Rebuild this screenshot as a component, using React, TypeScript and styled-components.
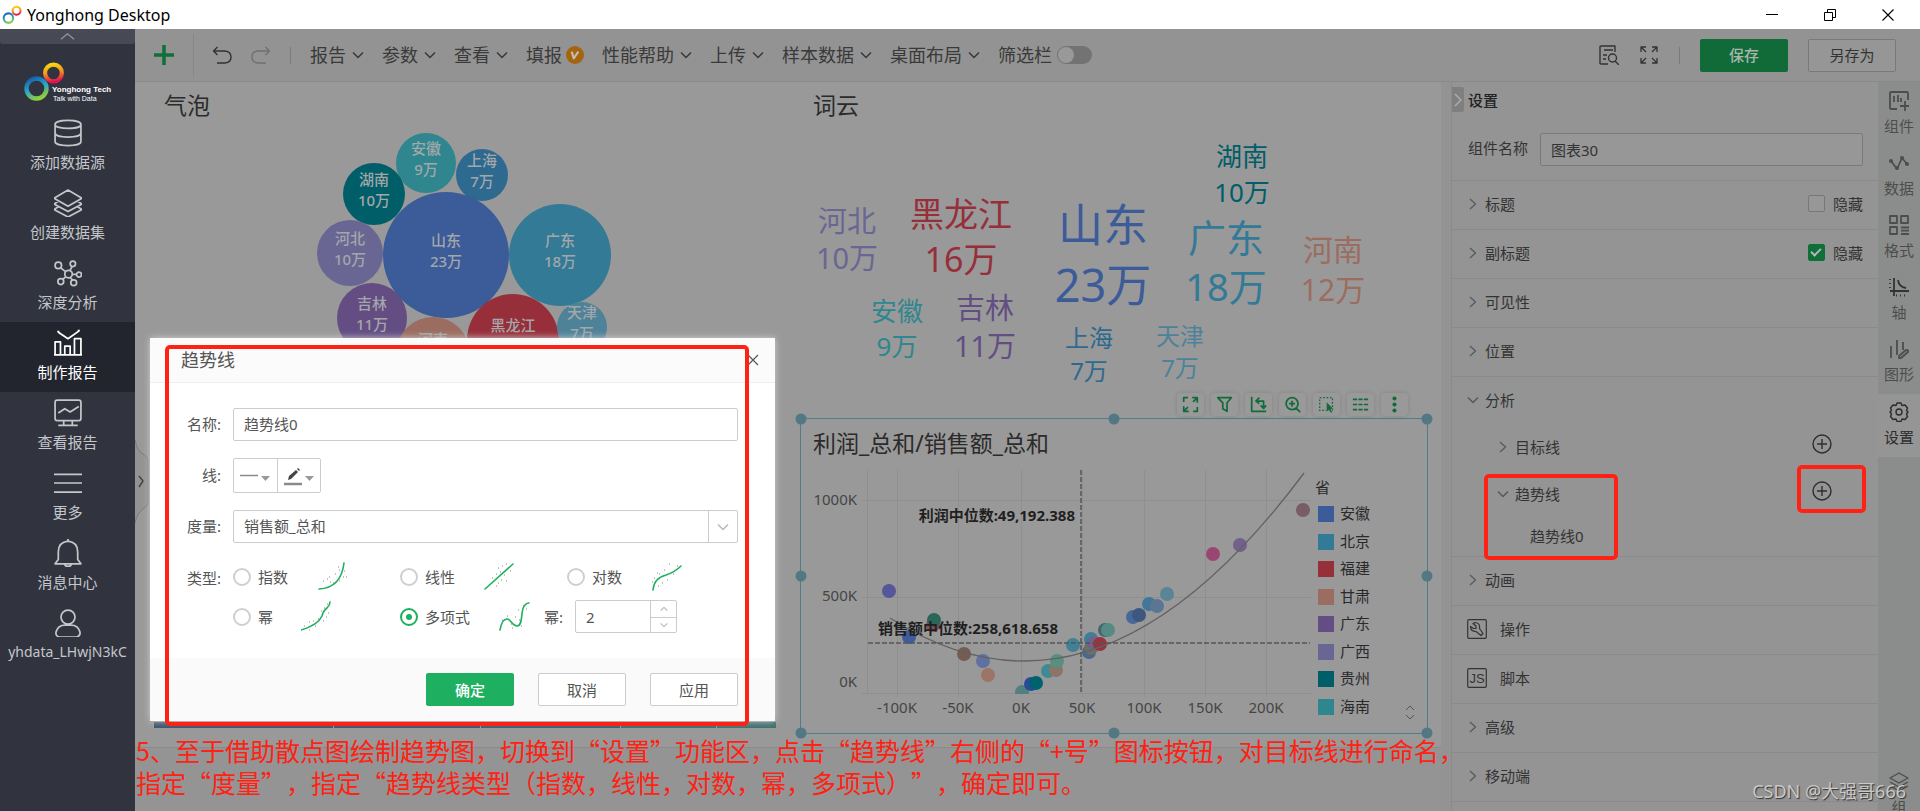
import React from 'react';
import styled, { createGlobalStyle, css } from 'styled-components';

const GlobalStyle = createGlobalStyle`
  *, *::before, *::after { box-sizing: border-box; }
  body {
    margin: 0;
    background: #939393;
    color: #333333;
    font-family: 'Noto Sans', 'Noto Sans CJK SC', sans-serif;
    font-size: 15px;
    line-height: 20px;
  }
  button, input, select { font: inherit; color: inherit; margin: 0; }
  button { padding: 0; border: 0; background: none; cursor: pointer; }
  svg { display: block; flex: none; }
  ul, nav { list-style: none; margin: 0; padding: 0; }
  h1, h2, p { margin: 0; font-weight: 400; }
`;

/* ---------- Window frame ---------- */

const Window = styled.div`
  position: relative;
  display: flex;
  flex-direction: column;
  height: 100vh;
  overflow: hidden;
`;

const TitleBar = styled.header`
  display: flex;
  align-items: center;
  flex: none;
  height: 29px;
  padding: 0 26px 0 2px;
  gap: 5px;
  background: #ffffff;
  color: #000000;
  font-size: 16px;
`;

const AppName = styled.h1`
  flex: 1;
  font-size: 16px;
  line-height: 24px;
`;

const WindowButtons = styled.div`
  display: flex;
  gap: 46px;
`;

const WindowButton = styled.button`
  width: 12px;
  height: 12px;
`;

const Body = styled.div`
  display: flex;
  flex: 1;
  min-height: 0;
`;

/* ---------- Left navigation ---------- */

const Sidebar = styled.aside`
  flex: none;
  width: 135px;
  background: #31343f;
  color: #c4c6ca;
`;

const SidebarFold = styled.button`
  display: flex;
  justify-content: center;
  align-items: center;
  width: 100%;
  height: 15px;
  border-radius: 0 0 3px 3px;
  background: #474a55;
`;

const Brand = styled.div`
  display: flex;
  height: 68px;
  padding: 17px 0 0 23px;
`;

const SideItem = styled.a<{ $active?: boolean; $latin?: boolean }>`
  display: flex;
  flex-direction: column;
  align-items: center;
  gap: 5px;
  height: 70px;
  padding-top: 7px;
  color: ${(p) => (p.$active ? '#ffffff' : 'inherit')};
  background: ${(p) => (p.$active ? '#22252e' : 'transparent')};
  font-size: ${(p) => (p.$latin ? 14 : 15)}px;
  text-decoration: none;
`;

/* ---------- Top toolbar ---------- */

const Main = styled.div`
  display: flex;
  flex-direction: column;
  flex: 1;
  min-width: 0;
`;

const Toolbar = styled.div`
  display: flex;
  align-items: center;
  flex: none;
  height: 53px;
  padding-right: 24px;
  border-bottom: 1px solid #8a8a8a;
  background: #939393;
  color: #3a3a3a;
`;

const AddButton = styled.button`
  display: flex;
  align-items: center;
  justify-content: center;
  width: 59px;
  height: 43px;
  border-right: 1px solid #878787;
`;

const History = styled.div`
  display: flex;
  align-items: center;
  gap: 19px;
  padding: 0 19px 0 18px;
`;

const Divider = styled.span`
  width: 1px;
  height: 17px;
  background: #7b7b7b;
`;

const Menu = styled.nav`
  display: flex;
  align-items: center;
  flex: 1;
  gap: 18px;
  font-size: 18px;
  line-height: 26px;
  white-space: nowrap;
`;

const MenuButton = styled.button`
  display: flex;
  align-items: center;
  gap: 6px;
`;

const VipBadge = styled.span`
  display: flex;
  align-items: center;
  justify-content: center;
  width: 18px;
  height: 18px;
  margin-left: -2px;
  border-radius: 50%;
  background: #a4650f;
`;

const SwitchLabel = styled.label`
  display: flex;
  align-items: center;
  gap: 5px;
`;

const Switch = styled.input`
  appearance: none;
  width: 35px;
  height: 18px;
  border-radius: 9px;
  background: #737373;
  &::before {
    content: '';
    display: block;
    width: 16px;
    height: 16px;
    margin: 1px;
    border-radius: 50%;
    background: #999999;
  }
`;

const ToolActions = styled.div`
  display: flex;
  align-items: center;
  gap: 20px;
`;

const ToolButton = styled.button<{ $primary?: boolean }>`
  width: 88px;
  height: 33px;
  border-radius: 2px;
  ${(p) =>
    p.$primary
      ? css`
          background: #116b39;
          color: #a8b5ad;
          font-weight: 500;
        `
      : css`
          border: 1px solid #797979;
          background: #969696;
          color: #333333;
        `}
`;

/* ---------- Report canvas ---------- */

const Workspace = styled.div`
  display: flex;
  flex: 1;
  min-height: 0;
`;

const Canvas = styled.div`
  position: relative;
  flex: 1;
  min-width: 0;
  margin-right: 10px;
  padding-bottom: 63px;
  background: #949494;
`;

const Board = styled.div`
  display: grid;
  grid-template-columns: 1fr 1fr;
  align-items: start;
  height: 100%;
  border-bottom: 1px solid #8b8b8b;
  background: #999999;
`;

const Widget = styled.section`
  min-width: 0;
`;

const WidgetTitle = styled.h2<{ $inset: number; $height: number }>`
  height: ${(p) => p.$height}px;
  padding-left: ${(p) => p.$inset}px;
  color: #2b2b2b;
  font-size: 23px;
  line-height: ${(p) => p.$height - 2}px;
`;

const Drawing = styled.svg`
  width: 100%;
  height: auto;
`;

const SelectedWidget = styled.section`
  position: relative;
  margin: 0 13px 14px 12px;
  border: 1px solid #527c88;
`;

const Handle = styled.span<{ $x: string; $y: string }>`
  position: absolute;
  left: ${(p) => p.$x};
  top: ${(p) => p.$y};
  width: 11px;
  height: 11px;
  border-radius: 50%;
  background: #527884;
  transform: translate(-50%, -50%);
`;

const WidgetTools = styled.div`
  position: absolute;
  right: 19px;
  bottom: 100%;
  display: flex;
  gap: 7px;
  margin-bottom: 3px;
`;

const WidgetTool = styled.button`
  display: flex;
  align-items: center;
  justify-content: center;
  width: 27px;
  height: 23px;
  border-radius: 4px;
  background: #999999;
  box-shadow: 0 0 4px rgba(0, 0, 0, 0.14);
`;

const TableSlice = styled.div`
  display: grid;
  grid-template-columns: 179px 146px 139px 95px 59px;
  gap: 1px;
  align-self: end;
  height: 6px;
  margin: 0 0 20px 19px;
`;

const TableCell = styled.span<{ $color: string }>`
  background: ${(p) => p.$color};
`;

const SideHandle = styled.button`
  position: absolute;
  left: 0;
  top: 358px;
  width: 14px;
  height: 83px;
`;

/* ---------- Settings panel ---------- */

const Panel = styled.aside`
  flex: none;
  width: 427px;
  border-left: 1px solid #8a8a8a;
  background: #949494;
`;

const PanelHead = styled.div`
  display: flex;
  gap: 4px;
  height: 49px;
  padding-top: 5px;
`;

const PanelTitle = styled.h2`
  padding-top: 3px;
  color: #222222;
  font-size: 15px;
  font-weight: 500;
`;

const FoldButton = styled.button`
  display: flex;
  align-items: center;
  justify-content: center;
  width: 12px;
  height: 25px;
  border-radius: 0 2px 2px 0;
  background: #7f7f7f;
`;

const NameRow = styled.label`
  display: flex;
  align-items: flex-start;
  gap: 12px;
  height: 49px;
  padding: 2px 15px 14px 16px;
  line-height: 30px;
`;

const NameInput = styled.input`
  flex: 1;
  min-width: 0;
  height: 33px;
  padding: 0 10px;
  border: 1px solid #7a7a7a;
  border-radius: 2px;
  background: #979797;
`;

const Section = styled.div`
  border-top: 1px solid #8a8a8a;
`;

const SectionRow = styled.div<{ $indent?: number; $height?: number }>`
  position: relative;
  display: flex;
  align-items: center;
  height: ${(p) => p.$height ?? 48}px;
  padding: 0 15px 3px ${(p) => 15 + (p.$indent ?? 0)}px;
`;

const SectionButton = styled.button<{ $wide?: boolean }>`
  display: flex;
  align-items: center;
  flex: 1;
  gap: ${(p) => (p.$wide ? 13 : 6)}px;
  text-align: left;
`;

const HideLabel = styled.label`
  display: flex;
  align-items: center;
  gap: 8px;
`;

const CheckBox = styled.input`
  appearance: none;
  display: grid;
  place-items: center;
  width: 17px;
  height: 17px;
  border: 1px solid #777777;
  border-radius: 2px;
  background: #979797;
  &:checked {
    border-color: #0f6f38;
    background: #0f6f38;
  }
  &:checked::before {
    content: '';
    width: 10px;
    height: 6px;
    margin-top: -3px;
    border: solid #b5b5b5;
    border-width: 0 0 2px 2px;
    transform: rotate(-45deg);
  }
`;

const RoundAdd = styled.button`
  width: 20px;
  height: 20px;
  margin: 0 31px 6px 0;
`;

const MarkedGroup = styled.div`
  position: relative;
`;

const RedFrame = styled.span<{ $left: number; $top: number; $width: number; $height: number }>`
  position: absolute;
  left: ${(p) => p.$left}px;
  top: ${(p) => p.$top}px;
  width: ${(p) => p.$width}px;
  height: ${(p) => p.$height}px;
  border: 4px solid #ff2113;
  border-radius: 5px;
  pointer-events: none;
`;

/* ---------- Tab rail ---------- */

const Rail = styled.nav`
  display: flex;
  flex-direction: column;
  flex: none;
  width: 42px;
  padding-top: 2px;
  background: #8a8d8b;
  color: #4d4d4d;
`;

const RailTab = styled.button<{ $active?: boolean; $last?: boolean }>`
  display: flex;
  flex-direction: column;
  align-items: center;
  flex: none;
  gap: 5px;
  height: ${(p) => (p.$active ? 63 : 62)}px;
  padding-top: ${(p) => (p.$active ? 8 : 7)}px;
  background: ${(p) => (p.$active ? '#959595' : 'transparent')};
  color: ${(p) => (p.$active ? '#2c2c2c' : 'inherit')};
  margin-top: ${(p) => (p.$last ? '308px' : '0')};
`;

/* ---------- Trend line dialog ---------- */

const Dialog = styled.form`
  position: absolute;
  left: 150px;
  top: 338px;
  width: 625px;
  border-radius: 2px;
  background: #ffffff;
  color: #555555;
  box-shadow: 0 0 7px #d0d0d0;
`;

const DialogHead = styled.div`
  display: flex;
  align-items: center;
  justify-content: space-between;
  height: 45px;
  padding: 0 16px 0 31px;
  border-bottom: 1px solid #eceef3;
  background: #fbfbfb;
`;

const DialogTitle = styled.h2`
  font-size: 18px;
  line-height: 26px;
`;

const DialogBody = styled.div`
  display: grid;
  grid-template-columns: 34px 1fr;
  gap: 17px 12px;
  padding: 25px 37px;
`;

const FieldLabel = styled.label`
  align-self: center;
  justify-self: end;
  padding-bottom: 2px;
  white-space: nowrap;
`;

const TypeLabel = styled(FieldLabel)`
  align-self: start;
  line-height: 36px;
`;

const TextBox = styled.input`
  width: 100%;
  height: 33px;
  padding: 0 10px 2px;
  border: 1px solid #cccccc;
  border-radius: 2px;
  background: #ffffff;
`;

const StyleButtons = styled.div`
  display: flex;
  width: 88px;
  height: 35px;
  border: 1px solid #cccccc;
  border-radius: 2px;
`;

const StyleButton = styled.button`
  display: flex;
  align-items: center;
  justify-content: center;
  flex: 1;
  & + & {
    border-left: 1px solid #cccccc;
  }
`;

const SelectWrap = styled.div`
  display: flex;
  height: 33px;
  border: 1px solid #cccccc;
  border-radius: 2px;
`;

const MeasureSelect = styled.select`
  appearance: none;
  flex: 1;
  padding: 0 10px 1px;
  border: 0;
  background: transparent;
`;

const SelectArrow = styled.span`
  display: flex;
  align-items: center;
  justify-content: center;
  width: 29px;
  border-left: 1px solid #cccccc;
`;

const TypeGrid = styled.div`
  display: grid;
  grid-template-columns: repeat(3, 167px);
  gap: 7px 0;
`;

const TypeOption = styled.div`
  display: flex;
  align-items: center;
  height: 33px;
  white-space: nowrap;
`;

const RadioLabel = styled.label<{ $gap: number }>`
  display: flex;
  align-items: center;
  gap: 7px;
  margin-right: ${(p) => p.$gap}px;
`;

const Radio = styled.input`
  appearance: none;
  display: grid;
  place-items: center;
  width: 18px;
  height: 18px;
  border: 2px solid #cfcfcf;
  border-radius: 50%;
  &:checked {
    border-color: #1eb060;
  }
  &:checked::before {
    content: '';
    width: 6px;
    height: 6px;
    border-radius: 50%;
    background: #1eb060;
  }
`;

const PowerField = styled.div`
  display: flex;
  align-items: center;
  gap: 12px;
  height: 33px;
  margin-left: -23px;
`;

const Stepper = styled.div`
  display: flex;
  width: 102px;
  height: 33px;
  border: 1px solid #cccccc;
  border-radius: 2px;
`;

const StepperInput = styled.input`
  flex: 1;
  min-width: 0;
  padding: 0 10px;
  border: 0;
  background: transparent;
`;

const StepperButtons = styled.div`
  display: grid;
  grid-template-rows: 1fr 1fr;
  width: 26px;
  border-left: 1px solid #cccccc;
`;

const StepButton = styled.button`
  display: grid;
  place-items: center;
  & + & {
    border-top: 1px solid #cccccc;
  }
`;

const DialogFoot = styled.div`
  display: flex;
  justify-content: flex-end;
  gap: 24px;
  height: 63px;
  padding: 15px 37px;
  background: #fafafa;
`;

const DialogButton = styled.button<{ $primary?: boolean }>`
  width: 88px;
  height: 33px;
  border: 1px solid ${(p) => (p.$primary ? '#1eb060' : '#cccccc')};
  border-radius: 2px;
  background: ${(p) => (p.$primary ? '#1eb060' : '#ffffff')};
  color: ${(p) => (p.$primary ? '#ffffff' : '#555555')};
  font-weight: ${(p) => (p.$primary ? 500 : 400)};
`;

const Note = styled.p`
  position: absolute;
  left: 136px;
  bottom: 13px;
  color: #ff2113;
  font-family: 'Noto Sans CJK SC', sans-serif;
  font-size: 25px;
  line-height: 32px;
  text-spacing-trim: space-all;
  white-space: nowrap;
`;

const Watermark = styled.span`
  position: absolute;
  right: 14px;
  bottom: 7px;
  color: #c9c9c9;
  font-size: 18px;
  line-height: 26px;
  text-shadow: 1px 1px 1px #333333;
`;

/* ---------- Icons ---------- */

type IconProps = { d: string; size?: number; box?: number; color?: string; w?: number; children?: React.ReactNode };

const Icon = ({ d, size = 20, box = 20, color = 'currentColor', w = 1.5, children }: IconProps) => (
  <svg width={size} height={size} viewBox={`0 0 ${box} ${box}`} fill="none" stroke={color} strokeWidth={w} strokeLinejoin="round" aria-hidden="true">
    <path d={d} />
    {children}
  </svg>
);

const Down = ({ color = '#3a3a3a', size = 12 }: { color?: string; size?: number }) => (
  <Icon d="M1 3.5L6 8.5L11 3.5" box={12} size={size} color={color} w={1.6} />
);
const Right = () => <Icon d="M3 1L8.500 6L3 11" box={12} size={12} color="#5a5a5a" w={1.3} />;

const Rings = ({ size, id }: { size: number; id: string }) => (
  <svg width={size} height={size} viewBox="0 0 42 42" fill="none" aria-hidden="true">
    <defs>
      <linearGradient id={`${id}a`} x1="0.2" y1="0" x2="0.6" y2="1">
        <stop offset="0" stopColor="#1463b0" />
        <stop offset="0.5" stopColor="#2aa5c9" />
        <stop offset="1" stopColor="#8fce3c" />
      </linearGradient>
      <linearGradient id={`${id}b`} x1="0.3" y1="0" x2="0.5" y2="1">
        <stop offset="0" stopColor="#fbd40d" />
        <stop offset="0.5" stopColor="#f39121" />
        <stop offset="1" stopColor="#e8114b" />
      </linearGradient>
    </defs>
    <circle cx="13.500" cy="27.500" r="10" stroke={`url(#${id}a)`} strokeWidth="4.400" />
    <circle cx="30.500" cy="12" r="8.400" stroke={`url(#${id}b)`} strokeWidth="4.200" />
  </svg>
);

const sideItems: { label: string; d: string }[] = [
  { label: '添加数据源', d: 'M1 5c0-5 24-5 24 0s-24 5-24 0v16c0 5 24 5 24 0V5M1 13c0 5 24 5 24 0' },
  { label: '创建数据集', d: 'M13 1L26 8.500L13 16L0 8.500zM4 11.500L0 14L13 21L26 14L22 11.500M4 16.500L0 19L13 26L26 19L22 16.500' },
  {
    label: '深度分析',
    d: 'M17 14a3.500 3.500 0 1 1-7 0a3.500 3.500 0 1 1 7 0M7 6a3 3 0 1 1-6 0a3 3 0 1 1 6 0M20 4.500a2.500 2.500 0 1 1-5 0a2.500 2.500 0 1 1 5 0M25.500 14.500a2.300 2.300 0 1 1-4.600 0a2.300 2.300 0 1 1 4.600 0M9 21a2.700 2.700 0 1 1-5.400 0a2.700 2.700 0 1 1 5.400 0M21 22a2.700 2.700 0 1 1-5.400 0a2.700 2.700 0 1 1 5.400 0M6 8l5 4M16.700 7l-2 4M17 14.300h4M11 16.500l-3 2.500M15 17l2.500 3',
  },
  { label: '制作报告', d: 'M1 24V12h5v12M10 24V16h5v8M19 24V9h6v15M0 24h26M4 3l9 6L23 2M3 2.500h2M22 1.500h2' },
  { label: '查看报告', d: 'M3 1h20q2 0 2 2v15q0 2-2 2H3q-2 0-2-2V3q0-2 2-2zM9 20v4M17 20v4M4 24.500h18M4 13l6-4l5 3l8-5' },
  { label: '更多', d: 'M0 5h26M0 13h26M0 21.500h26' },
  { label: '消息中心', d: 'M1 23h24L22 19V12q0-9-9-10q-9 1-9 10v7zM10 23q0 2.500 3 2.500t3-2.500M13 2V0' },
  { label: 'yhdata_LHwjN3kC', d: 'M19.500 7.500a6.500 6.500 0 1 1-13 0a6.500 6.500 0 1 1 13 0M5 26q-4-1-3-5q2-6 8-6h6q6 0 8 6q1 4-3 5z' },
];

const menuItems = ['报告', '参数', '查看', '填报', '性能帮助', '上传', '样本数据', '桌面布局'];

/* ---------- Chart data ---------- */

const bubbles: [string, string, number, number, number, string][] = [
  ['安徽', '9万', 426, 163, 30, '#30868f'],
  ['上海', '7万', 482, 175, 26, '#2e6990'],
  ['湖南', '10万', 374, 194, 31, '#005e69'],
  ['山东', '23万', 446, 255, 63, '#3b5b99'],
  ['广东', '18万', 560, 255, 51, '#337a96'],
  ['河北', '10万', 350, 253, 33, '#6a6694'],
  ['吉林', '11万', 372, 318, 35, '#634d83'],
  ['河南', '12万', 433, 354, 37, '#9b6d60'],
  ['黑龙江', '16万', 513, 340, 46, '#972f3a'],
  ['天津', '7万', 582, 327, 25, '#4e8299'],
];

const words: [string, string, number, number, number, number, string][] = [
  ['河北', '10万', 847, 221, 258, 29, '#6a6694'],
  ['黑龙江', '16万', 961, 214, 259, 34, '#972f3a'],
  ['山东', '23万', 1103, 225, 285, 45, '#3b5b99'],
  ['湖南', '10万', 1242, 156, 192, 26, '#005e69'],
  ['广东', '18万', 1226, 238, 287, 38, '#337a96'],
  ['河南', '12万', 1333, 250, 290, 30, '#9b6d60'],
  ['安徽', '9万', 897, 311, 346, 26, '#30868f'],
  ['吉林', '11万', 985, 308, 346, 29, '#634d83'],
  ['上海', '7万', 1089, 338, 371, 24, '#2e6990'],
  ['天津', '7万', 1180, 336, 368, 24, '#4e8299'],
];

const dots: [number, number, string][] = [
  [1303, 510, '#7a5c66'], [1240, 545, '#72618c'], [1213, 554, '#9a4672'], [1167, 594, '#5a8596'],
  [1149, 604, '#437799'], [1157, 606, '#5b7692'], [1133, 617, '#4a6799'], [1139, 615, '#3c587f'],
  [1105, 630, '#40686a'], [1108, 630, '#568a84'], [1091, 639, '#3c7f96'], [1073, 645, '#418096'],
  [1089, 652, '#49678f'], [1091, 648, '#6b6f66'], [1094, 643, '#72618c'], [1100, 644, '#97343f'],
  [1048, 671, '#3f8a94'], [1056, 670, '#8d7468'], [1057, 661, '#588f80'], [1022, 692, '#51807f'],
  [1031, 684, '#2c4a9a'], [1036, 683, '#00626e'], [889, 591, '#56569a'], [933, 625, '#8f4a55'],
  [934, 620, '#2a665a'], [909, 637, '#3f5c9b'], [964, 654, '#755c50'], [983, 661, '#6070a0'], [988, 675, '#9c7566'],
];

const xTicks: [number, string][] = [
  [897, '-100K'], [958, '-50K'], [1021, '0K'], [1082, '50K'], [1144, '100K'], [1205, '150K'], [1266, '200K'],
];
const yTicks: [number, number, string][] = [[500, 500, '1000K'], [597, 596, '500K'], [693, 682, '0K']];

const legend: [string, string][] = [
  ['安徽', '#3b5b99'], ['北京', '#337a96'], ['福建', '#972f3a'], ['甘肃', '#9b6d60'],
  ['广东', '#634d83'], ['广西', '#6a6694'], ['贵州', '#005e69'], ['海南', '#30868f'],
];

const widgetTools: { label: string; d: string }[] = [
  { label: '放大', d: 'M2 7V2h5M12 2h6v6M18 13v5h-5M8 18H2v-6M13 7l4-4M7 13l-4 4' },
  { label: '筛选', d: 'M2 2h16l-5 6v10l-5-3V8z' },
  { label: '行列互换', d: 'M2 1v17h17M8 6h8v8M11 2L7 6l4 3M12.500 11l3.500 3.500l3-3.500' },
  { label: '缩放', d: 'M16.500 9a7 7 0 1 1-14 0a7 7 0 1 1 14 0M14 14l5 5M6 9h7M9.500 5.500v7' },
  { label: '选择', d: '' },
  { label: '明细', d: 'M1 4h5M7.500 4h5M14 4h5M1 10h5M7.500 10h5M14 10h5M1 16h5M7.500 16h5M14 16h5' },
  { label: '更多操作', d: '' },
];

const BubbleChart = () => (
  <Drawing viewBox="135 130 653 288" fontSize="15" fontWeight="500" textAnchor="middle" role="img" aria-label="气泡">
    {bubbles.map(([name, value, x, y, r, color]) => (
      <g key={name}>
        <circle cx={x} cy={y} r={r} fill={color} />
        <text x={x} y={y - 9} fill="#a3a7aa">{name}</text>
        <text x={x} y={y + 12} fill="#a3a7aa">{value}</text>
      </g>
    ))}
  </Drawing>
);

const WordCloud = () => (
  <Drawing viewBox="788 130 653 288" textAnchor="middle" role="img" aria-label="词云">
    {words.map(([name, value, x, y1, y2, size, color]) => (
      <g key={name} fill={color} fontSize={size}>
        <text x={x} y={y1} dy="0.38em">{name}</text>
        <text x={x} y={y2} dy="0.38em">{value}</text>
      </g>
    ))}
  </Drawing>
);

const ScatterChart = () => (
  <Drawing viewBox="801 470 626 263" fontSize="15" role="img" aria-label="利润_总和/销售额_总和">
    <defs>
      <clipPath id="plot"><rect x="867" y="470" width="450" height="224" /></clipPath>
    </defs>
    <g stroke="#8f8f8f">
      <path d="M867.500 470V694" />
      {xTicks.map(([x]) => <path key={x} d={`M${x}.500 470V697`} />)}
      {yTicks.map(([y]) => <path key={y} d={`M862 ${y}.500H1311`} />)}
    </g>
    <g fill="#454545">
      {xTicks.map(([x, t]) => <text key={t} x={x} y="713" textAnchor="middle">{t}</text>)}
      {yTicks.map(([, y, t]) => <text key={t} x="857" y={y + 5} textAnchor="end">{t}</text>)}
    </g>
    <g clipPath="url(#plot)">
      {dots.map(([x, y, c], i) => <circle key={i} cx={x} cy={y} r="7" fill={c} />)}
    </g>
    <path d="M890 618Q1097 751 1304 473" fill="none" stroke="#626262" strokeWidth="1.300" />
    <path d="M1081 470V693M868 643H1310" stroke="#555555" strokeWidth="1.500" strokeDasharray="5 2" />
    <g fill="#1f1f1f" fontWeight="700">
      <text x="1075" y="521" textAnchor="end">利润中位数:49,192.388</text>
      <text x="1058" y="634" textAnchor="end">销售额中位数:258,618.658</text>
    </g>
    <g fill="#2a2a2a">
      <text x="1315" y="493">省</text>
      {legend.map(([name, color], i) => {
        const y = Math.round(514 + i * 27.5);
        return (
          <g key={name}>
            <rect x="1318" y={y - 8} width="16" height="16" fill={color} />
            <text x="1340" y={y + 5}>{name}</text>
          </g>
        );
      })}
    </g>
    <path d="M1406 710l4-4l4 4M1406 715l4 4l4-4" fill="none" stroke="#555555" />
  </Drawing>
);

const fits: Record<string, { line: string; dots: string }> = {
  指数: { line: 'M2 28Q24 27 27 2', dots: 'M6 20h1M10 18h1M13 21h1M18 13h1M21 6h1M22 9h1M16 22h1M22 20h1M26 16h1M29 16h1M12 16h1M27 10h1' },
  线性: { line: 'M1 28L29 3', dots: 'M8 17h1M12 13h1M14 7h1M18 5h1M22 3h1M20 14h1M22 20h1M14 22h1M17 19h1M26 10h1M12 25h1M16 11h1' },
  对数: { line: 'M3 29Q4 17 16 14Q25 11 31 5', dots: 'M2 21h1M4 17h1M9 13h1M14 9h1M19 3h1M12 22h1M17 19h1M23 13h1M27 5h1M8 25h1M7 12h1' },
  幂: { line: 'M0 29Q17 24 21 15Q22 10 26 7Q29 4 29 1', dots: 'M3 25h1M8 21h1M12 20h1M8 29h1M14 25h1M17 18h1M23 7h1M26 3h1M22 20h1M25 16h1M27 12h1M20 10h1' },
  多项式: { line: 'M1 29Q3 18 8 18C12 18 13 25 18 25C26 25 19 3 30 2', dots: 'M3 19h1M8 15h1M12 23h1M16 16h1M20 19h1M19 9h1M24 5h1M27 8h1M13 27h1M22 25h1' },
};

const FitIcon = ({ name }: { name: string }) => (
  <svg width="32" height="32" viewBox="0 0 32 32" fill="none" aria-hidden="true">
    <path d={fits[name].dots} stroke="#8a8a8a" strokeWidth="1.200" />
    <path d={fits[name].line} stroke="#1eb060" strokeWidth="1.600" strokeLinecap="round" />
  </svg>
);

const FitOption = ({ name, gap, checked }: { name: string; gap: number; checked?: boolean }) => (
  <TypeOption>
    <RadioLabel $gap={gap}>
      <Radio type="radio" name="fit" defaultChecked={checked} />
      {name}
    </RadioLabel>
    <FitIcon name={name} />
  </TypeOption>
);

const TrendDialog = () => (
  <Dialog onSubmit={(e) => e.preventDefault()}>
    <DialogHead>
      <DialogTitle>趋势线</DialogTitle>
      <button type="button" aria-label="关闭">
        <Icon d="M1 1L11 11M11 1L1 11" box={12} size={12} color="#555555" w={1.2} />
      </button>
    </DialogHead>
    <DialogBody>
      <FieldLabel htmlFor="trend-name">名称:</FieldLabel>
      <TextBox id="trend-name" defaultValue="趋势线0" />
      <FieldLabel as="span">线:</FieldLabel>
      <StyleButtons>
        <StyleButton type="button" aria-label="线型">
          <svg width="32" height="20" viewBox="0 0 32 20" aria-hidden="true">
            <path d="M1 9.500H19" stroke="#8a8a8a" strokeWidth="1.500" />
            <path d="M22 10h9l-4.500 5z" fill="#999999" />
          </svg>
        </StyleButton>
        <StyleButton type="button" aria-label="颜色">
          <svg width="32" height="20" viewBox="0 0 32 20" aria-hidden="true">
            <path d="M5 14l1-4l7-6l2 2l-7 7zM14 3l1-1l2 2l-1 1z" fill="#444444" />
            <path d="M1 18H19" stroke="#8a8a8a" strokeWidth="2.500" />
            <path d="M22 10h9l-4.500 5z" fill="#999999" />
          </svg>
        </StyleButton>
      </StyleButtons>
      <FieldLabel htmlFor="trend-measure">度量:</FieldLabel>
      <SelectWrap>
        <MeasureSelect id="trend-measure"><option>销售额_总和</option></MeasureSelect>
        <SelectArrow><Down color="#bbbbbb" /></SelectArrow>
      </SelectWrap>
      <TypeLabel as="span">类型:</TypeLabel>
      <TypeGrid>
        <FitOption name="指数" gap={29} />
        <FitOption name="线性" gap={29} />
        <FitOption name="对数" gap={28} />
        <FitOption name="幂" gap={28} />
        <FitOption name="多项式" gap={29} checked />
        <PowerField>
          <label htmlFor="trend-power">幂:</label>
          <Stepper>
            <StepperInput id="trend-power" defaultValue="2" />
            <StepperButtons>
              <StepButton type="button" aria-label="增加"><Icon d="M2 8L6 4L10 8" box={12} size={10} color="#bbbbbb" /></StepButton>
              <StepButton type="button" aria-label="减少"><Icon d="M2 4L6 8L10 4" box={12} size={10} color="#bbbbbb" /></StepButton>
            </StepperButtons>
          </Stepper>
        </PowerField>
      </TypeGrid>
    </DialogBody>
    <DialogFoot>
      <DialogButton $primary>确定</DialogButton>
      <DialogButton type="button">取消</DialogButton>
      <DialogButton type="button">应用</DialogButton>
    </DialogFoot>
    <RedFrame $left={15} $top={7} $width={584} $height={381} />
  </Dialog>
);

const PlainSection = ({ label, hide }: { label: string; hide?: boolean }) => (
  <Section>
    <SectionRow>
      <SectionButton><Right />{label}</SectionButton>
      {hide !== undefined && (
        <HideLabel><CheckBox type="checkbox" defaultChecked={hide} />隐藏</HideLabel>
      )}
    </SectionRow>
  </Section>
);

const AddCircle = ({ label }: { label: string }) => (
  <RoundAdd aria-label={label}>
    <Icon d="M19 10a9 9 0 1 1-18 0a9 9 0 1 1 18 0M5 10h10M10 5v10" color="#2e2e2e" w={1.4} />
  </RoundAdd>
);

const SettingsPanel = () => (
  <Panel>
    <PanelHead>
      <FoldButton aria-label="收起"><Icon d="M5 2L11 8L5 14" box={16} size={16} color="#aaaaaa" w={1.6} /></FoldButton>
      <PanelTitle>设置</PanelTitle>
    </PanelHead>
    <NameRow>
      组件名称
      <NameInput defaultValue="图表30" />
    </NameRow>
    <PlainSection label="标题" hide={false} />
    <PlainSection label="副标题" hide />
    <PlainSection label="可见性" />
    <PlainSection label="位置" />
    <Section>
      <SectionRow><SectionButton><Down color="#5a5a5a" />分析</SectionButton></SectionRow>
      <SectionRow $indent={30} $height={47}>
        <SectionButton><Right />目标线</SectionButton>
        <AddCircle label="添加目标线" />
      </SectionRow>
      <MarkedGroup>
        <SectionRow $indent={30} $height={47}>
          <SectionButton><Down color="#5a5a5a" />趋势线</SectionButton>
          <AddCircle label="添加趋势线" />
          <RedFrame $left={345} $top={-7} $width={69} $height={48} />
        </SectionRow>
        <SectionRow $indent={63} $height={37}>
          <SectionButton>趋势线0</SectionButton>
        </SectionRow>
        <RedFrame $left={32} $top={2} $width={134} $height={86} />
      </MarkedGroup>
    </Section>
    <PlainSection label="动画" />
    <Section>
      <SectionRow>
        <SectionButton $wide>
          <Icon d="M2 .7h16q1.300 0 1.300 1.300v16q0 1.300-1.300 1.300H2q-1.300 0-1.300-1.300V2q0-1.300 1.300-1.300zM6 4.500l3 2.500v2.500H6.500L3.500 7.500q0 5 5.500 5l5 4l2-2l-3.500-5q1-5.500-4.500-6z" color="#333333" w={1.200} />
          操作
        </SectionButton>
      </SectionRow>
    </Section>
    <Section>
      <SectionRow>
        <SectionButton $wide>
          <Icon d="M2 .7h16q1.300 0 1.300 1.300v16q0 1.300-1.300 1.300H2q-1.300 0-1.300-1.300V2q0-1.300 1.300-1.300z" color="#333333" w={1.200}>
            <text x="10" y="15" textAnchor="middle" fontSize="13" fontFamily="Liberation Sans, sans-serif" fill="#333333" stroke="none">JS</text>
          </Icon>
          脚本
        </SectionButton>
      </SectionRow>
    </Section>
    <PlainSection label="高级" />
    <PlainSection label="移动端" />
    <Section />
  </Panel>
);

const TabRail = () => (
  <Rail>
    <RailTab>
      <Icon d="M8 18H2q-1 0-1-1V2q0-1 1-1h16q1 0 1 1v7M5 5v6M9 4v7M12 7v4M16 10v10M11 15h9" w={1.8} />
      组件
    </RailTab>
    <RailTab>
      <Icon d="M2 8l6 8l5-11l5 6" w={1.800}>
        <g fill="currentColor" stroke="none"><circle cx="2" cy="8" r="2" /><circle cx="8" cy="15" r="2" /><circle cx="13" cy="5" r="2" /><circle cx="18" cy="11" r="2" /></g>
      </Icon>
      数据
    </RailTab>
    <RailTab>
      <Icon d="M1 1h7v7H1zM12 1h7v7h-7zM1 12h7v7H1zM12 12.500h8M12 15.700h8M12 19h8" w={1.800} />
      格式
    </RailTab>
    <RailTab>
      <Icon d="M5 1v18M1 14h19M9 3q1 7 8 8" w={1.800} color="#333333"><path d="M1 2v10M7 18.500h12" strokeDasharray="1 3" /></Icon>
      轴
    </RailTab>
    <RailTab>
      <Icon d="M2 7v12M8 1v15M14 3v8M10 17l7-6q3 0 2 2l-7 6h-2z" w={1.800} />
      图形
    </RailTab>
    <RailTab $active>
      <Icon d="M8 1h4l1 2.500l3-.500l2.500 3l-1 2.500l1.500 1.500l-1.500 2l1 2.500l-2.500 3l-3-.500l-1 2.500H8L7 17l-3 .500l-2.500-3l1-2.500L1 10l1.500-1.500l-1-2.500L4 3l3 .500zM13 10a3 3 0 1 1-6 0a3 3 0 1 1 6 0" w={1.400} />
      设置
    </RailTab>
    <RailTab $last>
      <Icon d="M10 1l9 5l-9 5l-9-5zM1 10l9 5l9-5M1 14l9 5l9-5" w={1.400} />
      组
    </RailTab>
  </Rail>
);

export default function App() {
  return (
    <Window>
      <GlobalStyle />
      <TitleBar>
        <Rings size={20} id="app" />
        <AppName>Yonghong Desktop</AppName>
        <WindowButtons>
          <WindowButton aria-label="最小化"><Icon d="M0 5.500h12" box={12} size={12} w={1} /></WindowButton>
          <WindowButton aria-label="还原"><Icon d="M.5 3.500h8v8h-8zM3.500 3V.5h8v8H9" box={12} size={12} w={1} /></WindowButton>
          <WindowButton aria-label="关闭窗口"><Icon d="M.5 .5l11 11M11.500 .5l-11 11" box={12} size={12} w={1.100} /></WindowButton>
        </WindowButtons>
      </TitleBar>
      <Body>
        <Sidebar>
          <SidebarFold aria-label="折叠"><Icon d="M1 11L8 5L15 11" box={16} size={15} color="#8f929a" /></SidebarFold>
          <Brand>
            <svg width="100" height="44" viewBox="0 0 100 44" aria-hidden="true">
              <Rings size={42} id="brand" />
              <g fontFamily="Liberation Sans, sans-serif" fill="#ffffff">
                <text x="29" y="31" fontSize="8" fontWeight="700">Yonghong Tech</text>
                <text x="30" y="40" fontSize="7">Talk with Data</text>
              </g>
            </svg>
          </Brand>
          <nav>
            {sideItems.map((item) => (
              <SideItem key={item.label} href="#" $active={item.label === '制作报告'} $latin={item.label.startsWith('yhdata')}>
                <Icon d={item.d} size={28} box={26} w={1.600} />
                {item.label}
              </SideItem>
            ))}
          </nav>
        </Sidebar>
        <Main>
          <Toolbar>
            <AddButton aria-label="新建"><Icon d="M10 0v20M0 10h20" color="#11703a" w={3.500} /></AddButton>
            <History>
              <button aria-label="撤销"><Icon d="M5.500 2L1.500 6l4 4M1.500 6H13q6 .5 6 6t-6 6H5" w={1.400} color="#333333" /></button>
              <button aria-label="重做"><Icon d="M14.500 2l4 4l-4 4M18.500 6H7q-6 .5-6 6t6 6h8" w={1.400} color="#707070" /></button>
              <Divider />
            </History>
            <Menu>
              {menuItems.map((label) => (
                <MenuButton key={label}>
                  {label}
                  {label === '填报' ? (
                    <VipBadge><Icon d="M2 2l2.500 8L10 2" box={12} size={10} color="#c4bdb0" w={2.500} /></VipBadge>
                  ) : (
                    <Down />
                  )}
                </MenuButton>
              ))}
              <SwitchLabel>筛选栏<Switch type="checkbox" role="switch" /></SwitchLabel>
            </Menu>
            <ToolActions>
              <button aria-label="预览"><Icon d="M9 19H2q-1 0-1-1V2q0-1 1-1h14v6M5 5h9M4 10h4M4 14h3M17.500 13a4 4 0 1 1-8 0a4 4 0 1 1 8 0M16 16l4 4" w={1.400} color="#333333" /></button>
              <button aria-label="全屏"><Icon d="M2 7V2h5M13 2h5v5M18 13v5h-5M7 18H2v-5M2 2l5 5M18 2l-5 5M18 18l-5-5M2 18l5-5" w={1.300} color="#333333" /></button>
              <Divider />
              <ToolButton $primary>保存</ToolButton>
              <ToolButton>另存为</ToolButton>
            </ToolActions>
          </Toolbar>
          <Workspace>
            <Canvas>
              <Board>
                <Widget>
                  <WidgetTitle $inset={29} $height={48}>气泡</WidgetTitle>
                  <BubbleChart />
                </Widget>
                <Widget>
                  <WidgetTitle $inset={25} $height={48}>词云</WidgetTitle>
                  <WordCloud />
                </Widget>
                <TableSlice>
                  {['#3b566c', '#3b566c', '#3a5f72', '#3d6d72', '#40716f'].map((c, i) => <TableCell key={i} $color={c} />)}
                </TableSlice>
                <SelectedWidget>
                  <WidgetTitle $inset={12} $height={51}>利润_总和/销售额_总和</WidgetTitle>
                  <ScatterChart />
                  {['0%', '50%', '100%'].flatMap((x) =>
                    ['0%', '50%', '100%'].filter((y) => x !== '50%' || y !== '50%').map((y) => <Handle key={x + y} $x={x} $y={y} />),
                  )}
                  <WidgetTools>
                    {widgetTools.map(({ label, d }) => (
                      <WidgetTool key={label} aria-label={label}>
                        <Icon d={d} size={17} color="#116b39" w={2}>
                          {label === '选择' && (
                            <>
                              <path d="M2 2h15v15H2z" strokeDasharray="2 2" strokeWidth="1.500" />
                              <path d="M10 7l8 8l-3 .5l2 3.500l-2 1l-2-3.500l-3 2z" fill="#116b39" stroke="#999999" strokeWidth="0.500" />
                            </>
                          )}
                          {label === '更多操作' && (
                            <g fill="#116b39" stroke="none"><circle cx="10" cy="3" r="2.400" /><circle cx="10" cy="10" r="2.400" /><circle cx="10" cy="17" r="2.400" /></g>
                          )}
                        </Icon>
                      </WidgetTool>
                    ))}
                  </WidgetTools>
                </SelectedWidget>
              </Board>
              <SideHandle aria-label="展开">
                <svg width="14" height="83" viewBox="0 0 14 83" fill="none" aria-hidden="true">
                  <path d="M0 0Q2 11 8 14Q13 17 13 20V63Q13 66 8 69Q2 73 0 83" fill="#939393" stroke="#7c7c7c" />
                  <path d="M4 36l4 5l-4 6" stroke="#444444" strokeWidth="1.500" />
                </svg>
              </SideHandle>
            </Canvas>
            <SettingsPanel />
            <TabRail />
          </Workspace>
        </Main>
      </Body>
      <TrendDialog />
      <Note>
        5、至于借助散点图绘制趋势图，切换到“设置”功能区，点击“趋势线”右侧的“+号”图标按钮，对目标线进行命名，
        <br />
        指定“度量”，指定“趋势线类型（指数，线性，对数，幂，多项式）”，确定即可。
      </Note>
      <Watermark>CSDN @大强哥666</Watermark>
    </Window>
  );
}
